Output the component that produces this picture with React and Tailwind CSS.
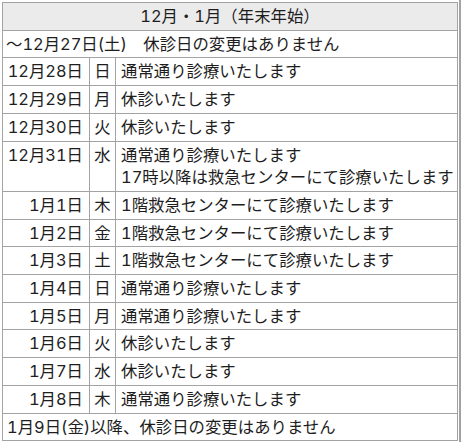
import React from "react";

const rows = [
  ["12月28日", "日", ["通常通り診療いたします"]],
  ["12月29日", "月", ["休診いたします"]],
  ["12月30日", "火", ["休診いたします"]],
  ["12月31日", "水", ["通常通り診療いたします", "17時以降は救急センターにて診療いたします"]],
  ["1月1日", "木", ["1階救急センターにて診療いたします"]],
  ["1月2日", "金", ["1階救急センターにて診療いたします"]],
  ["1月3日", "土", ["1階救急センターにて診療いたします"]],
  ["1月4日", "日", ["通常通り診療いたします"]],
  ["1月5日", "月", ["通常通り診療いたします"]],
  ["1月6日", "火", ["休診いたします"]],
  ["1月7日", "水", ["休診いたします"]],
  ["1月8日", "木", ["通常通り診療いたします"]],
];

export default function App() {
  const cell = "border border-[#a3a3a3] py-[2px] align-top";
  return (
    <div
      className="relative w-[461px] h-[442px] bg-white pt-[2px] pl-[2px] text-[#1e1e1e] text-[16.4px] leading-[22.7px] tabular-nums"
      style={{ fontFamily: 'Inter, "Noto Sans CJK JP", "Noto Sans", sans-serif' }}
    >
      <table className="w-[456px] border-collapse table-fixed">
        <colgroup>
          <col className="w-[87px]" />
          <col className="w-[26px]" />
          <col />
        </colgroup>
        <tbody>
          <tr>
            <td colSpan={3} className={`${cell} bg-[#ebebeb] text-center`}>
              12月・1月（年末年始）
            </td>
          </tr>
          <tr>
            <td colSpan={3} className={`${cell} pl-[3px]`}>
              ～12月27日(土)　休診日の変更はありません
            </td>
          </tr>
          {rows.map(([d, w, lines]) => (
            <tr key={d}>
              <td className={`${cell} text-right pr-[6px]`}>{d}</td>
              <td className={`${cell} text-center`}>{w}</td>
              <td className={`${cell} pl-[5px] whitespace-nowrap`}>
                {lines.map((l) => (
                  <div key={l}>{l}</div>
                ))}
              </td>
            </tr>
          ))}
          <tr>
            <td colSpan={3} className={`${cell} pl-[4px]`}>
              1月9日(金)以降、休診日の変更はありません
            </td>
          </tr>
        </tbody>
      </table>
      <div className="absolute right-0 top-0 h-full w-[2px] bg-[#a3a3a3]" />
    </div>
  );
}
